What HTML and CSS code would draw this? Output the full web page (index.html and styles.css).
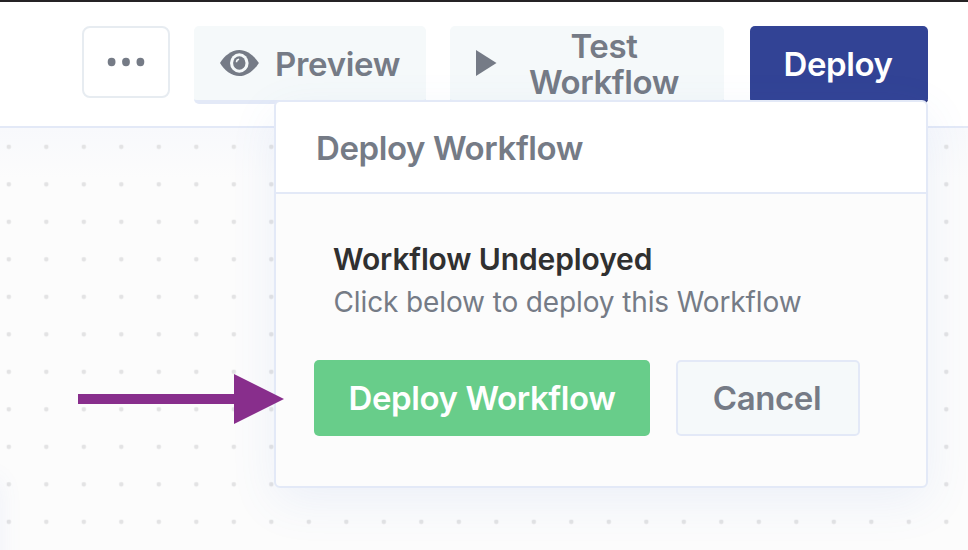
FILE: index.html
```html
<!DOCTYPE html>
<html lang="en">
<head>
<meta charset="utf-8">
<title>Deploy Workflow</title>
<link rel="stylesheet" href="styles.css">
</head>
<body>
<div class="app">
  <header class="toolbar">
    <button class="btn more" aria-label="More">
      <svg width="38" height="10" viewBox="0 0 38 10"><g fill="#757b86"><ellipse cx="4.6" cy="5" rx="3.9" ry="4.2"/><ellipse cx="19" cy="5" rx="3.9" ry="4.2"/><ellipse cx="33.4" cy="5" rx="3.9" ry="4.2"/></g></svg>
    </button>
    <button class="btn soft preview">
      <svg width="40" height="26" viewBox="0 0 40 26"><path d="M1 13C5 6 12.500 0 20.300 0S35.500 6 39.900 13C35.500 20 28 26 20.300 26S5 20 1 13Z" fill="#757b86"/><ellipse cx="20.300" cy="13" rx="9.300" ry="9.700" fill="#f5f9fa"/><ellipse cx="20.300" cy="13" rx="6.200" ry="6.800" fill="#757b86"/><path d="M17.500 12.200c0-1.800 1-2.700 2.600-2.900" fill="none" stroke="#f5f9fa" stroke-width="1.500"/></svg>
      <span class="preview-label">Preview</span>
    </button>
    <button class="btn soft test">
      <svg width="21" height="26" viewBox="0 0 21 26"><path d="M0 0l20.500 13L0 26Z" fill="#757b86"/></svg>
      <span class="test-label">Test Workflow</span>
    </button>
    <button class="btn deploy">Deploy</button>
  </header>
  <main class="canvas">
    <svg class="dots" width="968" height="422">
      <defs><pattern id="dot" width="37.500" height="37.500" patternUnits="userSpaceOnUse" x="-10" y="0"><circle cx="18.800" cy="18.800" r="2.300" fill="#e3e3e4"/></pattern></defs>
      <rect width="968" height="422" fill="url(#dot)"/>
    </svg>
  </main>
  <div class="side-shadow"></div>
  <section class="panel">
    <h1 class="panel-head">Deploy Workflow</h1>
    <div class="panel-body">
      <h2 class="title">Workflow Undeployed</h2>
      <p class="hint">Click below to deploy this Workflow</p>
      <div class="actions">
        <button class="btn confirm">Deploy Workflow</button>
        <button class="btn soft cancel">Cancel</button>
      </div>
    </div>
  </section>
  <svg class="arrow" width="206" height="50" viewBox="0 0 206 50"><path d="M0 20H156V0L206 25L156 50V30H0Z" fill="#882e8c"/></svg>
</div>
</body>
</html>
```
FILE: styles.css
```css
* { box-sizing: border-box; }
body { margin: 0; font-family: Inter, "Liberation Sans", sans-serif; }
h1, h2, p { margin: 0; }
.app {
  position: relative;
  width: 968px;
  height: 550px;
  overflow: hidden;
  display: flex;
  flex-direction: column;
  background: #fcfcfc;
}
.toolbar {
  flex: none;
  display: flex;
  align-items: flex-start;
  gap: 24px;
  height: 128px;
  padding: 24px 40px 0 82px;
  background: #fff;
  border-top: 2px solid #252325;
  border-bottom: 2px solid #e3e9f7;
}
.btn {
  display: flex;
  align-items: center;
  justify-content: center;
  flex: none;
  height: 76px;
  margin: 0;
  padding: 0;
  border: 0;
  border-radius: 5px;
  font: 600 33px/36px Inter, "Liberation Sans", sans-serif;
  letter-spacing: -0.4px;
  color: #757b86;
  white-space: nowrap;
}
.more { width: 88px; height: 72px; background: #fff; border: 2px solid #e7ecf1; border-radius: 8px; }
.soft { background: #f5f9fa; }
.preview { width: 232px; height: 78px; justify-content: flex-start; gap: 16px; padding-left: 25px; border-bottom: 4px solid #e3e9f7; }
.preview-label { padding-top: 2px; letter-spacing: -0.3px; }
.test { width: 274px; height: 78px; justify-content: flex-start; padding-left: 26px; border-bottom: 4px solid #e3e9f7; }
.test-label { width: 168px; margin-left: 23px; padding-top: 2px; text-align: center; white-space: normal; }
.deploy { width: 178px; height: 78px; margin-left: 2px; padding-right: 2px; background: #324395; border-bottom: 3px solid #202c70; color: #fff; }
.canvas {
  flex: 1;
  background: linear-gradient(#f8f9fc, #fcfcfc 50px);
}
.dots { display: block; }
.side-shadow {
  position: absolute;
  left: -30px;
  top: 480px;
  width: 30px;
  height: 100px;
  box-shadow: 0 0 24px rgba(90, 120, 220, .08);
}
.panel {
  position: absolute;
  left: 274px;
  top: 100px;
  width: 654px;
  height: 388px;
  background: #fcfcfc;
  border: 2px solid #e3e9f7;
  border-radius: 6px;
  box-shadow: 0 14px 48px rgba(80, 125, 210, .09);
}
.panel-head {
  height: 92px;
  padding: 26px 40px 0;
  background: #fff;
  border-bottom: 2px solid #e3e9f7;
  border-radius: 5px 5px 0 0;
  font-size: 33px;
  line-height: 40px;
  font-weight: 600;
  letter-spacing: -0.4px;
  color: #757b86;
}
.panel-body { padding: 47px 38px 0; }
.title { padding-left: 19px; font-size: 30px; line-height: 36px; font-weight: 600; letter-spacing: -0.12px; color: #303030; }
.hint { padding: 8px 0 0 19.5px; font-size: 28px; line-height: 34px; letter-spacing: -0.12px; color: #757b86; }
.actions { display: flex; gap: 26px; margin-top: 41px; }
.confirm { width: 336px; background: #68cd8a; color: #fff; }
.cancel { width: 184px; padding-right: 2px; border: 2px solid #e3e9f7; }
.arrow { position: absolute; left: 78px; top: 374px; }
```
